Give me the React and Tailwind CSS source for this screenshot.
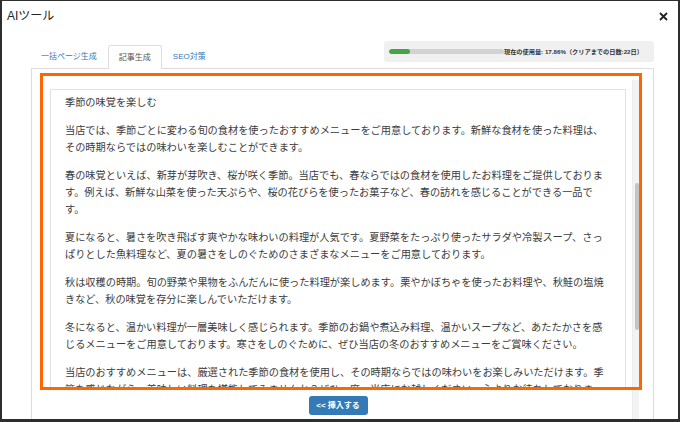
import React from 'react';

const paragraphs = [
  '季節の味覚を楽しむ',
  '当店では、季節ごとに変わる旬の食材を使ったおすすめメニューをご用意しております。新鮮な食材を使った料理は、その時期ならではの味わいを楽しむことができます。',
  '春の味覚といえば、新芽が芽吹き、桜が咲く季節。当店でも、春ならではの食材を使用したお料理をご提供しております。例えば、新鮮な山菜を使った天ぷらや、桜の花びらを使ったお菓子など、春の訪れを感じることができる一品です。',
  '夏になると、暑さを吹き飛ばす爽やかな味わいの料理が人気です。夏野菜をたっぷり使ったサラダや冷製スープ、さっぱりとした魚料理など、夏の暑さをしのぐためのさまざまなメニューをご用意しております。',
  '秋は収穫の時期。旬の野菜や果物をふんだんに使った料理が楽しめます。栗やかぼちゃを使ったお料理や、秋鮭の塩焼きなど、秋の味覚を存分に楽しんでいただけます。',
  '冬になると、温かい料理が一層美味しく感じられます。季節のお鍋や煮込み料理、温かいスープなど、あたたかさを感じるメニューをご用意しております。寒さをしのぐために、ぜひ当店の冬のおすすめメニューをご賞味ください。',
  '当店のおすすめメニューは、厳選された季節の食材を使用し、その時期ならではの味わいをお楽しみいただけます。季節を感じながら、美味しい料理を堪能してみませんか？ぜひ一度、当店にお越しください。心よりお待ちしております。',
];

function Tabs() {
  return (
    <div className="flex items-end">
      <div className="-mb-px h-[24px] px-[10px] mr-px flex items-center text-[8px] text-[#337ab7]">
        一括ページ生成
      </div>
      <div className="-mb-px h-[24px] px-[10px] mr-px flex items-center text-[8px] text-[#555] bg-white border border-b-0 border-[#ddd] rounded-t-[3px] relative z-10">
        記事生成
      </div>
      <div className="-mb-px h-[24px] px-[10px] flex items-center text-[8px] text-[#337ab7]">
        SEO対策
      </div>
    </div>
  );
}

function Usage() {
  return (
    <div className="mb-[6px] h-[21px] w-[270px] bg-[#f0f0f0] rounded-[3px] flex items-center pl-[5px] pr-[8px]">
      <div className="w-[115px] h-[5px] bg-[#d2d2d2] rounded-full overflow-hidden flex">
        <div className="w-[21px] h-full bg-[#45a34a] rounded-full" />
      </div>
      <span className="text-[6.2px] font-bold text-[#333] whitespace-nowrap">
        現在の使用量: 17.86%（クリアまでの日数:22日）
      </span>
    </div>
  );
}

export default function App() {
  return (
    <div
      className="relative w-[680px] h-[422px] bg-white border-l-2 border-r-2 border-t border-b-[3px] border-[#2e2e2e] overflow-hidden flex flex-col"
      style={{ fontFamily: '"Liberation Sans", "Noto Sans CJK JP", sans-serif' }}
    >
      <div className="h-[30px] flex items-center justify-between pl-[5px] pr-[10px] shrink-0">
        <h1 className="text-[12px] text-[#222]">AIツール</h1>
        <svg width="9" height="9" viewBox="0 0 9 9">
          <path d="M1 1L8 8M8 1L1 8" stroke="#222" strokeWidth="1.8" />
        </svg>
      </div>

      <div className="h-[37px] flex items-end justify-between pl-[29px] pr-[24px] shrink-0">
        <Tabs />
        <Usage />
      </div>

      <div className="flex-1 ml-[29px] mr-[24px] border border-b-0 border-[#ddd] flex pt-[11px] min-h-0">
        <div className="pl-[18px] pt-[9px]">
          <div className="w-[576px] h-[298px] border border-b-0 border-[#e3e3e3] overflow-hidden px-[14px] pt-[5px] text-[10.2px] leading-[16.8px] text-[#3c3c3c]">
            {paragraphs.map((p, i) => (
              <p key={i} className="mb-[11.4px]">{p}</p>
            ))}
          </div>
          <div className="w-[576px] flex justify-center mt-[9px]">
            <button className="h-[19px] w-[59px] rounded-[3px] bg-[#337ab7] text-white text-[8px] font-bold flex items-center justify-center whitespace-nowrap">
              &lt;&lt; 挿入する
            </button>
          </div>
        </div>
        <div className="ml-[6px] w-[7px] bg-[#f3f3f3] border-l border-[#ececec]">
          <div className="mt-[103px] ml-[2px] w-[4px] h-[147px] rounded-full bg-[#c4c4c4]" />
        </div>
      </div>

      <div className="absolute left-[38px] top-[72px] w-[602px] h-[317px] border-[3px] border-[#ff6600] pointer-events-none" />
    </div>
  );
}
